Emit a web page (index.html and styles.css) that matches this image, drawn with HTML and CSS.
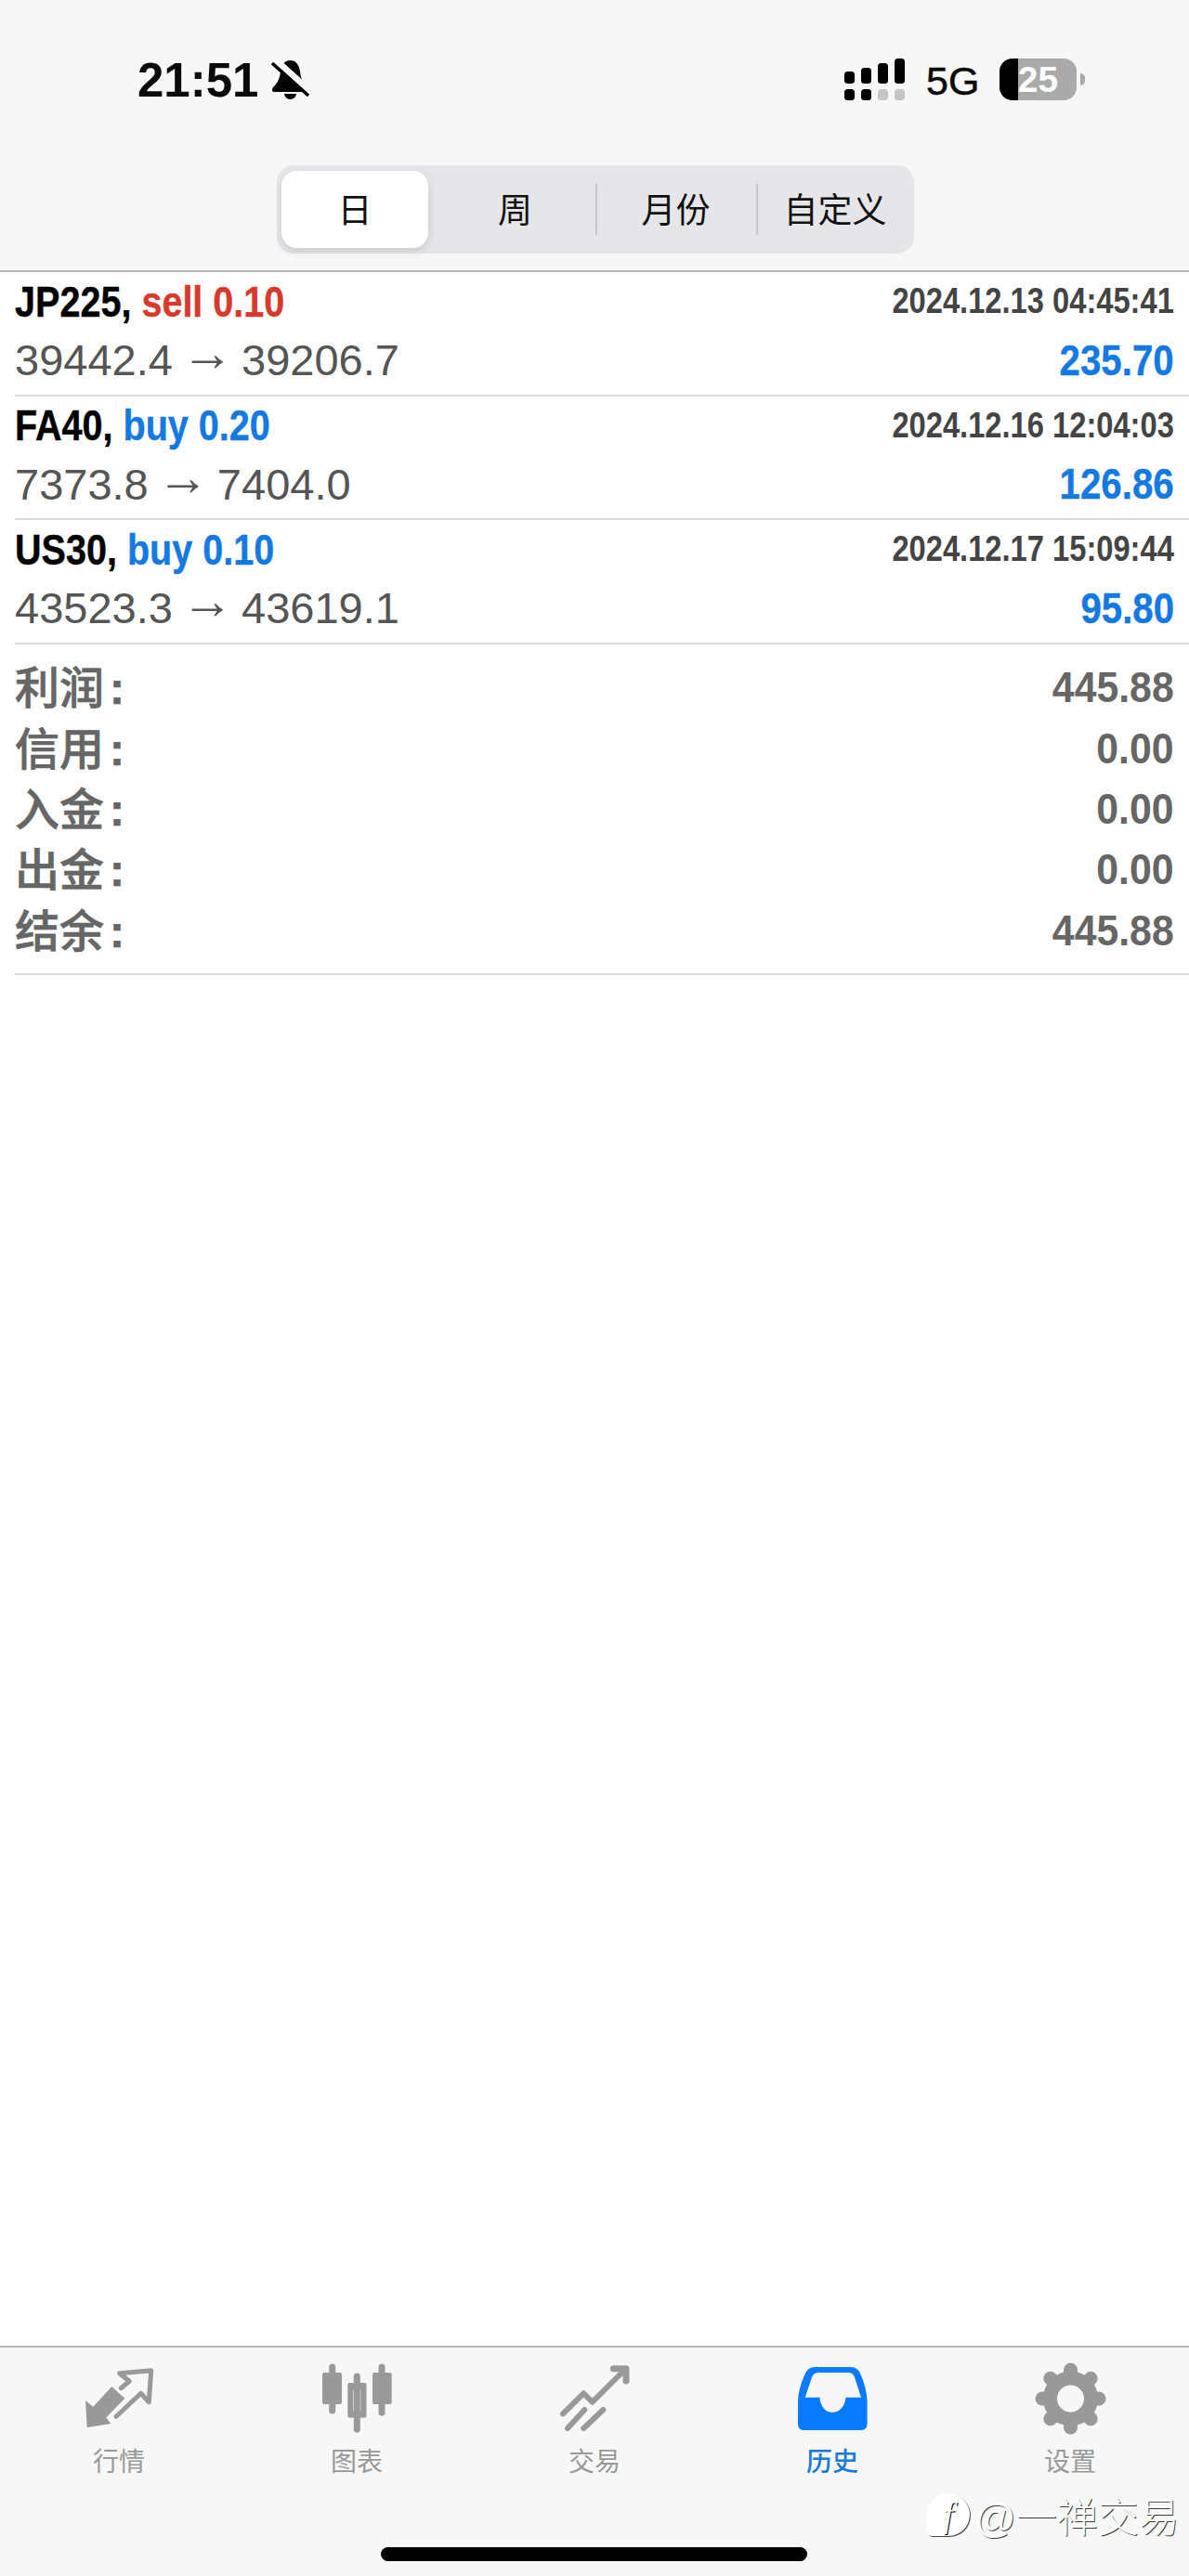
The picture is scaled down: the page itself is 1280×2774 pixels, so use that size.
FILE: index.html
```html
<!DOCTYPE html>
<html lang="zh-CN">
<head>
  <meta charset="UTF-8" />
  <title>历史</title>
  <meta name="viewport" content="width=device-width, initial-scale=1.0" />
  <link rel="stylesheet" href="styles.css">
</head>
<body>
  <header class="top">
    <div class="status">
      <span class="time">21:51</span>
      <svg class="bell" viewBox="0 0 42 44">
        <path d="M20.5 1C14 1 11 6 10 13C9 22 6 26 2 30C0 33 1 35 4 35H37C40 35 41 33 39 30C35 26 32 22 31 13C30 6 27 1 20.5 1Z"/>
        <path d="M14 37a6.5 6 0 0 0 13 0Z"/>
        <line class="bell-gap" x1="5" y1="1" x2="44" y2="36"/>
        <line class="bell-slash" x1="1" y1="4" x2="40" y2="39"/>
      </svg>
      <div class="status-right">
        <svg class="signal" viewBox="0 0 65 45">
          <rect x="0" y="14" width="11" height="13" rx="3.5"/>
          <rect x="18" y="10" width="11" height="17" rx="3.5"/>
          <rect x="36" y="5" width="11" height="22" rx="3.5"/>
          <rect x="54" y="0" width="11" height="27" rx="3.5"/>
          <rect x="0" y="33" width="11" height="12" rx="3.5"/>
          <rect x="18" y="33" width="11" height="12" rx="3.5"/>
          <rect class="off" x="36" y="33" width="11" height="12" rx="3.5"/>
          <rect class="off" x="54" y="33" width="11" height="12" rx="3.5"/>
        </svg>
        <span class="net">5G</span>
        <div class="battery"><span>25</span></div>
        <div class="battery-nub"></div>
      </div>
    </div>

    <div class="segments">
      <div class="segment active">日</div>
      <div class="segment shifted">周</div>
      <div class="segment divided">月份</div>
      <div class="segment divided">自定义</div>
    </div>
  </header>

  <main class="content">
    <div class="deal">
      <div class="line">
        <span class="title"><b>JP225,</b> <b class="sell">sell 0.10</b></span>
        <span class="date">2024.12.13 04:45:41</span>
      </div>
      <div class="line">
        <span class="prices">39442.4 <i>→</i> 39206.7</span>
        <span class="profit">235.70</span>
      </div>
    </div>
    <div class="deal">
      <div class="line">
        <span class="title"><b>FA40,</b> <b class="buy">buy 0.20</b></span>
        <span class="date">2024.12.16 12:04:03</span>
      </div>
      <div class="line">
        <span class="prices">7373.8 <i>→</i> 7404.0</span>
        <span class="profit">126.86</span>
      </div>
    </div>
    <div class="deal">
      <div class="line">
        <span class="title"><b>US30,</b> <b class="buy">buy 0.10</b></span>
        <span class="date">2024.12.17 15:09:44</span>
      </div>
      <div class="line">
        <span class="prices">43523.3 <i>→</i> 43619.1</span>
        <span class="profit">95.80</span>
      </div>
    </div>

    <div class="summary">
      <div class="sum-row"><span class="sum-label">利润<i>:</i></span><span class="sum-value">445.88</span></div>
      <div class="sum-row"><span class="sum-label">信用<i>:</i></span><span class="sum-value">0.00</span></div>
      <div class="sum-row"><span class="sum-label">入金<i>:</i></span><span class="sum-value">0.00</span></div>
      <div class="sum-row"><span class="sum-label">出金<i>:</i></span><span class="sum-value">0.00</span></div>
      <div class="sum-row"><span class="sum-label">结余<i>:</i></span><span class="sum-value">445.88</span></div>
    </div>
  </main>

  <footer class="bottom">
    <nav class="tabs">
      <div class="tab">
        <svg viewBox="0 0 80 80">
          <path class="solid" d="M4 41L12.3 47.7L32.3 26L46.3 38.7L26.3 59.3L31.3 66L5.7 70Z"/>
          <path class="line-icon" stroke-width="5" stroke-linejoin="miter" d="M42.3 27.7L51.3 20.3L40.7 11.7L74.7 8.7L72.3 42.7L63.7 33.3L37 58.3"/>
        </svg>
        <span>行情</span>
      </div>
      <div class="tab">
        <svg viewBox="0 0 80 80">
          <line class="line-icon" stroke-width="7" x1="13.7" y1="5" x2="13.7" y2="52"/>
          <rect class="solid" x="3" y="11" width="21" height="34" rx="2"/>
          <line class="line-icon" stroke-width="7" x1="40.3" y1="15" x2="40.3" y2="72"/>
          <path class="solid" fill-rule="evenodd" d="M32 22H49Q50.5 22 50.5 24V57Q50.5 59.5 49 59.5H32Q30.3 59.5 30.3 57V24Q30.3 22 32 22ZM37.5 29Q36.3 29 36.3 30.5V51Q36.3 52.7 37.5 52.7H43Q44.3 52.7 44.3 51V30.5Q44.3 29 43 29Z"/>
          <line class="line-icon" stroke-width="7" x1="67" y1="5" x2="67" y2="54"/>
          <rect class="solid" x="57" y="11" width="20.7" height="34" rx="2"/>
        </svg>
        <span>图表</span>
      </div>
      <div class="tab">
        <svg viewBox="0 0 80 80">
          <path class="line-icon" stroke-width="6" d="M6 55.3L28.3 33.3L37.7 42.7L73 7.5"/>
          <path class="line-icon" stroke-width="7" d="M60.3 6.7H74V20"/>
          <line class="line-icon" stroke-width="6" x1="11" y1="71" x2="29.3" y2="51"/>
          <line class="line-icon" stroke-width="6" x1="28.3" y1="71" x2="49.3" y2="51"/>
        </svg>
        <span>交易</span>
      </div>
      <div class="tab current">
        <svg viewBox="0 0 80 80">
          <path fill-rule="evenodd" d="M24 5H60Q68 5 71 14Q77 28 77.6 42V66Q77.6 73 71 73H9Q3 73 3 66V42Q3.5 28 10 14Q13 5 21 5ZM25 11Q20 11 18 16L10.7 37.7H26.6C27 48 33 53.7 40 53.7C47 53.7 54 48 54.4 37.7H71L64 16Q62 11 58 11Z"/>
        </svg>
        <span>历史</span>
      </div>
      <div class="tab">
        <svg viewBox="0 0 80 80">
          <circle class="gear-ring" cx="40.5" cy="39" r="22"/>
          <g class="gear-teeth">
            <line x1="40.5" y1="14" x2="40.5" y2="8"/>
            <line x1="40.5" y1="64" x2="40.5" y2="70"/>
            <line x1="15.5" y1="39" x2="10" y2="39"/>
            <line x1="65.5" y1="39" x2="71" y2="39"/>
            <line x1="22.8" y1="21.3" x2="18.8" y2="17.3"/>
            <line x1="58.2" y1="21.3" x2="62.2" y2="17.3"/>
            <line x1="22.8" y1="56.7" x2="18.8" y2="60.7"/>
            <line x1="58.2" y1="56.7" x2="62.2" y2="60.7"/>
          </g>
        </svg>
        <span>设置</span>
      </div>
    </nav>
    <div class="home-bar"></div>

    <div class="mark">
      <span class="mark-logo"><span>f</span></span>
      <span class="mark-text">@一禅交易</span>
    </div>
  </footer>
</body>
</html>
```

FILE: styles.css
```css
* {
  box-sizing: border-box;
}

html, body {
  margin: 0;
  padding: 0;
}

body {
  width: 1280px;
  height: 2774px;
  display: flex;
  flex-direction: column;
  background: white;
  font-family: "Liberation Sans", "Noto Sans CJK SC", sans-serif;
  overflow: hidden;
}

/* top area */
.top {
  height: 293px;
  background: #f7f7f7;
  border-bottom: 2px solid #b8b8b8;
  padding-top: 63px;
}

.status {
  display: flex;
  align-items: center;
  height: 45px;
  padding: 0 112px 0 148px;
}

.time {
  padding-top: 2px;
  font-size: 51px;
  font-weight: 700;
  color: #0a0a0a;
  line-height: 45px;
}

.bell {
  width: 42px;
  height: 44px;
  margin-left: 14px;
  fill: #000;
}

.bell-gap {
  stroke: #f7f7f7;
  stroke-width: 7;
}

.bell-slash {
  stroke: #000;
  stroke-width: 3.5;
}

.status-right {
  display: flex;
  align-items: center;
  margin-left: auto;
}

.signal {
  width: 65px;
  height: 45px;
  fill: #000;
}

.signal .off {
  fill: #c6c6c6;
}

.net {
  width: 55px;
  margin: 3px 0 0 23px;
  font-size: 43px;
  color: #0a0a0a;
  -webkit-text-stroke: 0.5px #0a0a0a;
  white-space: nowrap;
}

.battery {
  width: 83px;
  height: 45px;
  margin-left: 24px;
  border-radius: 14px;
  background: linear-gradient(90deg, #000 20px, #aaa 20px);
  color: white;
  font-size: 39px;
  font-weight: 700;
  line-height: 45px;
  text-align: center;
}

.battery-nub {
  width: 5px;
  height: 13px;
  margin-left: 4px;
  border-radius: 0 6px 6px 0;
  background: #aaa;
}

.segments {
  display: grid;
  grid-template-columns: 166px 177px 173px 170px;
  width: 686px;
  height: 95px;
  margin: 70px 0 0 298px;
  padding: 6px 0;
  background: #e6e6e9;
  border-radius: 18px;
}

.segment {
  position: relative;
  display: flex;
  align-items: center;
  justify-content: center;
  padding-bottom: 3px;
  font-size: 37px;
  color: #111;
}

.segment.active {
  margin: 0 3px 0 5px;
  background: white;
  border-radius: 16px;
  box-shadow: 0 4px 10px rgba(0,0,0,0.12);
}

.segment.shifted {
  padding-left: 4px;
}

.segment.divided::before {
  content: "";
  position: absolute;
  left: 0;
  top: 14px;
  bottom: 14px;
  width: 1.5px;
  background: #c8c8ca;
}

/* deals list */
.content {
  flex: 1;
}

.deal {
  height: 133.5px;
  margin-left: 16px;
  padding-right: 16px;
  border-bottom: 2px solid #dcdcdc;
}

.line {
  display: flex;
  justify-content: space-between;
  align-items: center;
  height: 63px;
}

.title {
  display: inline-block;
  font-size: 46px;
  transform: scaleX(0.86);
  transform-origin: left;
  color: #000;
  -webkit-text-stroke: 0.4px currentColor;
  white-space: nowrap;
}

.sell {
  color: #d63a2c;
}

.buy {
  color: #1479e0;
}

.date {
  display: inline-block;
  font-size: 38px;
  font-weight: 700;
  color: #444;
  transform: scaleX(0.86);
  transform-origin: right;
  white-space: nowrap;
}

.prices {
  font-size: 47px;
  color: #555;
  white-space: nowrap;
}

/* the plain arrow glyph is short, so it gets a bigger size and tighter margins */
.prices i {
  margin: 0 -4px;
  font-size: 56px;
  font-style: normal;
  line-height: 0;
  vertical-align: 5px;
}

.profit {
  display: inline-block;
  font-size: 46px;
  font-weight: 700;
  color: #1479e0;
  transform: scaleX(0.875);
  transform-origin: right;
  -webkit-text-stroke: 0.4px currentColor;
}

/* totals */
.summary {
  margin-left: 16px;
  padding: 11px 16px 17px 0;
  border-bottom: 2px solid #dcdcdc;
}

.sum-row {
  display: flex;
  justify-content: space-between;
  align-items: center;
  height: 65.4px;
}

.sum-label {
  font-size: 48px;
  font-weight: 500;
  color: #666;
  -webkit-text-stroke: 0.7px currentColor;
}

.sum-label i {
  margin-left: 6px;
  font-style: normal;
  font-weight: 700;
}

.sum-value {
  display: inline-block;
  padding-top: 6px;
  font-size: 46px;
  font-weight: 700;
  color: #666;
  transform: scaleX(0.93);
  transform-origin: right;
}

/* bottom tabs */
.bottom {
  position: relative;
  height: 248px;
  background: #f7f7f7;
  border-top: 2px solid #b8b8b8;
}

.tabs {
  display: grid;
  grid-template-columns: repeat(5, 256px);
  padding-top: 16px;
}

.tab {
  display: flex;
  flex-direction: column;
  align-items: center;
  color: #999;
  font-size: 28px;
  line-height: 40px;
}

.tab svg {
  width: 80px;
  height: 80px;
  margin-bottom: 8px;
}

.tab.current {
  color: #1a7bd6;
  font-weight: 500;
}

.tab.current svg {
  fill: #0a7aff;
}

.solid {
  fill: #999;
}

.line-icon {
  fill: none;
  stroke: #999;
  stroke-linecap: round;
  stroke-linejoin: round;
}

.gear-ring {
  fill: none;
  stroke: #999;
  stroke-width: 15;
}

.gear-teeth line {
  stroke: #999;
  stroke-width: 15;
  stroke-linecap: round;
}

.home-bar {
  width: 459px;
  height: 15px;
  margin: 71px 0 0 410px;
  background: #000;
  border-radius: 8px;
}

/* account stamp over the tab bar */
.mark {
  position: absolute;
  left: 998px;
  top: 148px;
  display: flex;
  align-items: center;
  white-space: nowrap;
}

.mark-logo {
  display: flex;
  align-items: center;
  justify-content: center;
  width: 46px;
  height: 46px;
  border-radius: 50% 50% 50% 12%;
  background: white;
  box-shadow: 1px 1px 0 rgba(0,0,0,0.7);
  font-family: "Liberation Serif", serif;
  font-size: 38px;
  font-style: italic;
  color: white;
  text-shadow: 1px 1px 0 #000;
}

.mark-text {
  margin-left: 5px;
  font-size: 44px;
  font-weight: 300;
  color: white;
  text-shadow: 1px 1px 0 rgba(0,0,0,0.75);
}
```
